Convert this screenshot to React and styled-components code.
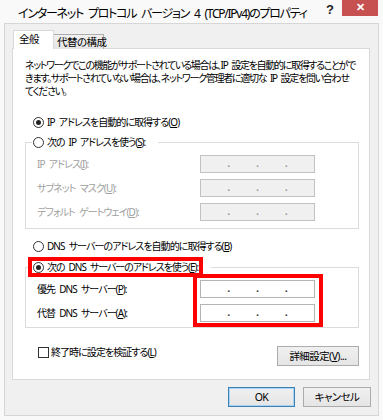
import React from 'react';
import styled, {createGlobalStyle} from 'styled-components';

const GlobalStyle = createGlobalStyle`
    html, body {
        margin: 0;
        padding: 0;
        background: #ffffff;
    }
    body {
        font-family: "Noto Sans", "Noto Sans CJK JP", sans-serif;
        font-size: 10px;
        letter-spacing: -0.95px;
        word-spacing: 2.5px;
        color: #000;
        font-feature-settings: "palt";
    }
    * { box-sizing: border-box; }
`

const Window = styled.div`
    width: 383px;
    height: 420px;
    background: #f9f9f9;
    padding: 0 4px 4px 4px;
    display: flex;
    flex-direction: column;
`

const TitleBar = styled.div`
    height: 24px;
    display: flex;
    align-items: flex-start;
`

const Title = styled.div`
    flex: 1;
    padding: 5px 0 0 14px;
    font-size: 12px;
    line-height: 17px;
    letter-spacing: -1.25px;
    word-spacing: 3px;
    white-space: nowrap;
    overflow: hidden;
`

const Help = styled.div`
    width: 12px;
    margin: 3px 6px 0 0;
    font-family: "Liberation Sans", sans-serif;
    font-weight: bold;
    font-size: 13px;
    line-height: 14px;
    letter-spacing: 0;
    text-align: center;
    color: #222;
`

const Close = styled.div`
    width: 36px;
    height: 16px;
    margin-right: 1px;
    background: #c75050;
    color: #fff;
    font-family: "Liberation Sans", sans-serif;
    font-weight: bold;
    font-size: 11px;
    line-height: 15px;
    letter-spacing: 0;
    text-align: center;
`

const Client = styled.div`
    flex: 1;
    background: #f0f0f0;
    border: 1px solid #d6d6d6;
    padding: 6px 8px 8px 7px;
    display: flex;
    flex-direction: column;
`

const Tabs = styled.div`
    display: flex;
    align-items: flex-end;
    height: 19px;
    margin: 0 0 -1px 1px;
    position: relative;
    z-index: 1;
`

const Tab = styled.div`
    width: ${p => p.$width}px;
    height: ${p => p.$active ? '19px' : '15px'};
    padding: ${p => p.$active ? '1px 0 0 5px' : '0 0 0 3px'};
    background: ${p => p.$active ? '#fff' : 'linear-gradient(#f0f0f0, #e5e5e5)'};
    border: 1px solid ${p => p.$active ? '#d9d9d9' : '#adadad'};
    border-bottom: none;
    line-height: 15px;
    font-size: 10.5px;
    letter-spacing: -0.5px;
    white-space: nowrap;
    margin-right: ${p => p.$active ? '-1px' : '0'};
    position: relative;
    z-index: ${p => p.$active ? 2 : 1};
`

const Panel = styled.div`
    background: #fff;
    border: 1px solid #d9d9d9;
    padding: 10px 10px 13px 12px;
    display: flex;
    flex-direction: column;
`

const Intro = styled.p`
    margin: 0;
    line-height: 13px;
    letter-spacing: -1.3px;
    white-space: nowrap;
`

const Row = styled.div`
    display: flex;
    align-items: center;
    height: 14px;
    line-height: 14px;
    margin-top: ${p => p.$top}px;
    padding-left: ${p => p.$left || 0}px;
    white-space: pre;
`

const Radio = styled.span`
    width: 11px;
    height: 11px;
    border-radius: 50%;
    border: 1px solid #333;
    background: #fff;
    margin-right: 3px;
    flex: none;
    display: flex;
    align-items: center;
    justify-content: center;

    &::after {
        content: '';
        width: 5px;
        height: 5px;
        border-radius: 50%;
        background: ${p => p.$checked ? '#222' : 'transparent'};
    }
`

const Check = styled.span`
    width: 11px;
    height: 11px;
    border: 1px solid #333;
    background: #fff;
    margin-right: 2px;
    flex: none;
`

const Group = styled.fieldset`
    margin: ${p => p.$top}px 0 0 0;
    padding: 0;
    border: 1px solid #dcdcdc;
    min-width: 0;
`

const Legend = styled.legend`
    margin-left: 6px;
    padding: 0 12px 0 0;
    line-height: 12px;
`

const Mark = styled.span`
    display: flex;
    align-items: center;
    height: 12px;
    padding: 0 1px;
    white-space: pre;
    letter-spacing: -1.05px;
    outline: ${p => p.$marked ? '4px solid #f00' : 'none'};
`

const GroupBody = styled.div`
    display: flex;
    padding: 7px 0 ${p => p.$bottom}px 11px;
`

const Labels = styled.div`
    width: 163px;
    display: flex;
    flex-direction: column;
    gap: 6px;
`

const Label = styled.div`
    height: 18px;
    line-height: 18px;
    white-space: nowrap;
    color: ${p => p.$disabled ? '#a0a0a0' : '#000'};
`

const Inputs = styled.div`
    display: flex;
    flex-direction: column;
    gap: 6px;
    ${p => p.$marked && `
        padding: 2px 4px 1px 3px;
        margin: -2px -4px -1px -3px;
        outline: 4px solid #f00;
    `}
`

const IpBox = styled.div`
    width: 115px;
    height: 18px;
    border: 1px solid ${p => p.$disabled ? '#c2c2c2' : '#b4b4b4'};
    background: ${p => p.$disabled ? '#f0f0f0' : '#fff'};
    display: grid;
    grid-template-columns: 1fr 2px 1fr 2px 1fr 2px 1fr;
    line-height: 14px;
    color: ${p => p.$disabled ? '#a0a0a0' : '#444'};
    font-family: "Liberation Sans", sans-serif;
    font-weight: bold;
    font-size: 11px;
    letter-spacing: 0;
    justify-items: center;
`

const Footer = styled.div`
    display: flex;
    justify-content: space-between;
    align-items: flex-start;
    margin-top: 17px;
    height: 21px;
`

const Button = styled.button`
    width: ${p => p.$width}px;
    height: 20px;
    margin-top: ${p => p.$top || 0}px;
    padding: 0;
    border: 1px solid ${p => p.$default ? '#3c7fb1' : '#acacac'};
    box-shadow: ${p => p.$default ? 'inset 0 0 0 1px #a9d4f5' : 'none'};
    background: linear-gradient(#f0f0f0, #e5e5e5);
    font-family: inherit;
    font-size: 10.5px;
    letter-spacing: -0.6px;
    font-feature-settings: "palt";
    color: #000;
    line-height: 16px;
`

const Actions = styled.div`
    display: flex;
    justify-content: flex-end;
    gap: 8px;
    margin: 7px -1px 0 0;
`

const U = styled.span`
    text-decoration: underline;
`

const IpField = ({disabled}) => (
    <IpBox $disabled={disabled}>
        <span></span><span>.</span><span></span><span>.</span><span></span><span>.</span><span></span>
    </IpBox>
)

const App = () => {
    return (
        <>
            <GlobalStyle />
            <Window>
                <TitleBar>
                    <Title>インターネット プロトコル バージョン 4 (TCP/IPv4)のプロパティ</Title>
                    <Help>?</Help>
                    <Close>✕</Close>
                </TitleBar>
                <Client>
                    <Tabs>
                        <Tab $active $width={41}>全般</Tab>
                        <Tab $width={51}>代替の構成</Tab>
                    </Tabs>
                    <Panel>
                        <Intro>
                            ネットワークでこの機能がサポートされている場合は、IP 設定を自動的に取得することがで<br/>
                            きます。サポートされていない場合は、ネットワーク管理者に適切な IP 設定を問い合わせ<br/>
                            てください。
                        </Intro>
                        <Row $top={17} $left={8}>
                            <Radio $checked /><span>IP アドレスを自動的に取得する(<U>O</U>)</span>
                        </Row>
                        <Group $top={7}>
                            <Legend>
                                <Mark><Radio /><span>次の IP アドレスを使う(<U>S</U>):</span></Mark>
                            </Legend>
                            <GroupBody $bottom={7}>
                                <Labels>
                                    <Label $disabled>IP アドレス(<U>I</U>):</Label>
                                    <Label $disabled>サブネット マスク(<U>U</U>):</Label>
                                    <Label $disabled>デフォルト ゲートウェイ(<U>D</U>):</Label>
                                </Labels>
                                <Inputs>
                                    <IpField disabled />
                                    <IpField disabled />
                                    <IpField disabled />
                                </Inputs>
                            </GroupBody>
                        </Group>
                        <Row $top={10} $left={8}>
                            <Radio /><span>DNS サーバーのアドレスを自動的に取得する(<U>B</U>)</span>
                        </Row>
                        <Group $top={8}>
                            <Legend>
                                <Mark $marked><Radio $checked /><span>次の DNS サーバーのアドレスを使う(<U>E</U>):</span></Mark>
                            </Legend>
                            <GroupBody $bottom={5}>
                                <Labels>
                                    <Label>優先 DNS サーバー(<U>P</U>):</Label>
                                    <Label>代替 DNS サーバー(<U>A</U>):</Label>
                                </Labels>
                                <Inputs $marked>
                                    <IpField />
                                    <IpField />
                                </Inputs>
                            </GroupBody>
                        </Group>
                        <Footer>
                            <Row $top={0} $left={13}>
                                <Check /><span>終了時に設定を検証する(<U>L</U>)</span>
                            </Row>
                            <Button $width={82} $top={1}>詳細設定(<U>V</U>)...</Button>
                        </Footer>
                    </Panel>
                    <Actions>
                        <Button $width={67} $default>OK</Button>
                        <Button $width={68}>キャンセル</Button>
                    </Actions>
                </Client>
            </Window>
        </>
    );
};

export default App;
